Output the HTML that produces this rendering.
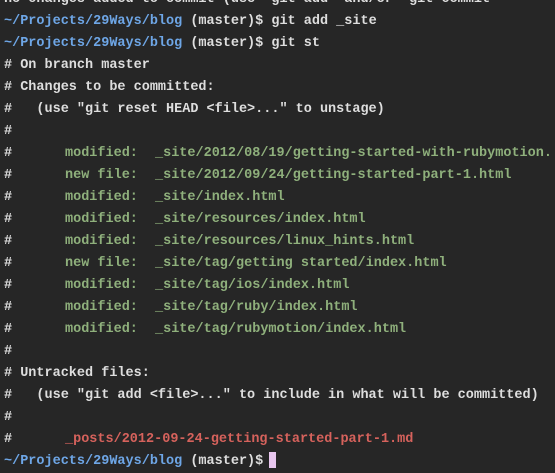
<!DOCTYPE html>
<html><head><meta charset="utf-8"><style>
html,body{margin:0;padding:0;background:#262626;width:555px;height:472px;overflow:hidden}
#w{position:absolute;left:0;top:2px;width:555px;height:470px}
.t{position:absolute;left:4px;font-family:"Liberation Mono",monospace;font-size:13.5px;font-weight:bold;color:#dedede;white-space:pre;line-height:22px;height:22px}
.b{color:#6ea6e6}.g{color:#8fb07c}.r{color:#d6625c}
.a{position:absolute}
</style></head><body><div id="w">
<div class="t" style="top:-13px">no changes added to commit (use "git add" and/or "git commit</div>
<div class="t" style="top:9px"><span class="b">~/Projects/29Ways/blog</span> (master)$ git add _site</div>
<div class="t" style="top:31px"><span class="b">~/Projects/29Ways/blog</span> (master)$ git st</div>
<div class="t" style="top:53px"># On branch master</div>
<div class="t" style="top:75px"># Changes to be committed:</div>
<div class="t" style="top:97px">#   (use "git reset HEAD &lt;file&gt;..." to unstage)</div>
<div class="t" style="top:119px">#</div>
<div class="t" style="top:141px;width:540px">#<span class="g a" style="left:61px">modified:</span><span class="g a" style="left:151px">_site/2012/08/19/getting-started-with-rubymotion.</span></div>
<div class="t" style="top:163px;width:540px">#<span class="g a" style="left:61px">new file:</span><span class="g a" style="left:151px">_site/2012/09/24/getting-started-part-1.html</span></div>
<div class="t" style="top:185px;width:540px">#<span class="g a" style="left:61px">modified:</span><span class="g a" style="left:151px">_site/index.html</span></div>
<div class="t" style="top:207px;width:540px">#<span class="g a" style="left:61px">modified:</span><span class="g a" style="left:151px">_site/resources/index.html</span></div>
<div class="t" style="top:229px;width:540px">#<span class="g a" style="left:61px">modified:</span><span class="g a" style="left:151px">_site/resources/linux_hints.html</span></div>
<div class="t" style="top:251px;width:540px">#<span class="g a" style="left:61px">new file:</span><span class="g a" style="left:151px">_site/tag/getting started/index.html</span></div>
<div class="t" style="top:273px;width:540px">#<span class="g a" style="left:61px">modified:</span><span class="g a" style="left:151px">_site/tag/ios/index.html</span></div>
<div class="t" style="top:295px;width:540px">#<span class="g a" style="left:61px">modified:</span><span class="g a" style="left:151px">_site/tag/ruby/index.html</span></div>
<div class="t" style="top:317px;width:540px">#<span class="g a" style="left:61px">modified:</span><span class="g a" style="left:151px">_site/tag/rubymotion/index.html</span></div>
<div class="t" style="top:339px">#</div>
<div class="t" style="top:361px"># Untracked files:</div>
<div class="t" style="top:383px">#   (use "git add &lt;file&gt;..." to include in what will be committed)</div>
<div class="t" style="top:405px">#</div>
<div class="t" style="top:427px;width:540px">#<span class="r a" style="left:61px">_posts/2012-09-24-getting-started-part-1.md</span></div>
<div class="t" style="top:449px"><span class="b">~/Projects/29Ways/blog</span> (master)$ </div>
<div style="position:absolute;left:269px;top:450px;width:7px;height:16px;background:#e8c6ee"></div>
</div></body></html>
